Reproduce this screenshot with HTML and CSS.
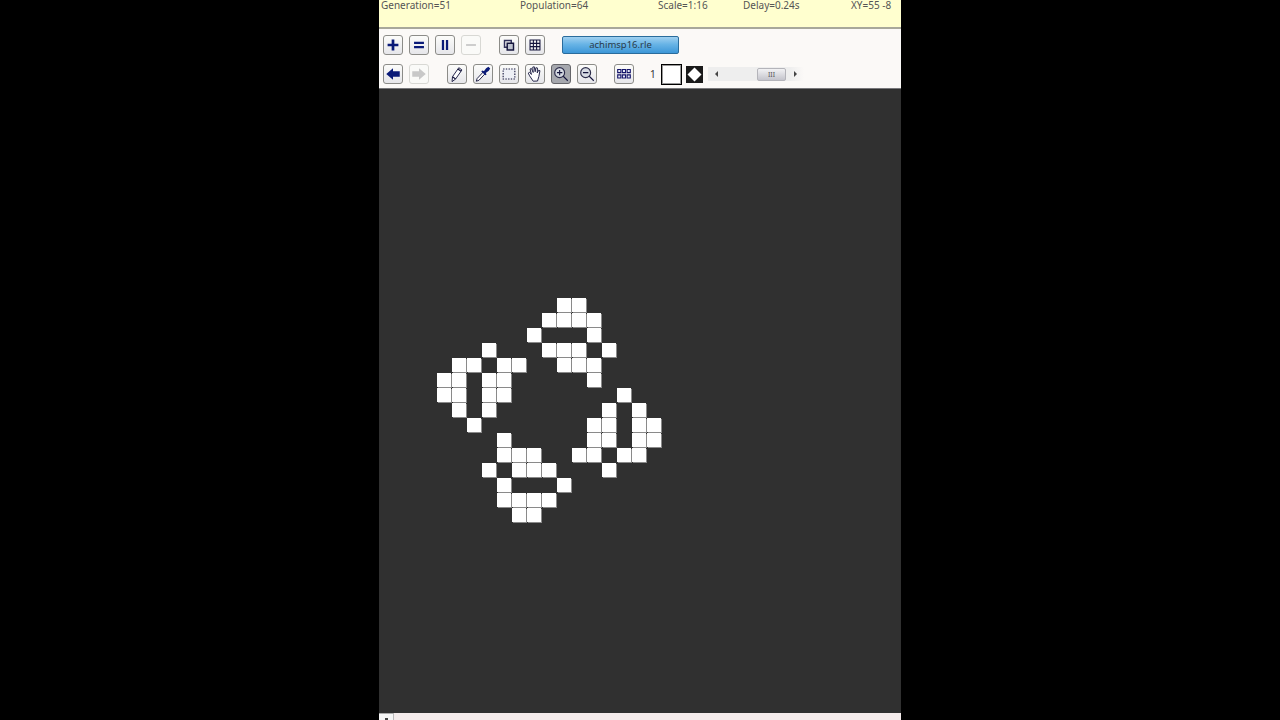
FILE: index.html
```html
<!DOCTYPE html>
<html lang="en">
<head>
  <meta charset="UTF-8" />
  <title>Golly</title>
  <link rel="stylesheet" href="styles.css">
</head>
<body>
  <div class="app">
    <!-- status -->
    <div class="status">
      <span>Generation=51</span>
      <span>Population=64</span>
      <span>Scale=1:16</span>
      <span>Delay=0.24s</span>
      <span>XY=55 -8</span>
    </div>

    <div class="tools">
      <div class="row row-top">
        <button class="btn"><svg class="icon" viewBox="0 0 20 20"><path class="navy" d="M8.500 4h3v4.500h4.500v3h-4.500v4.500h-3v-4.500h-4.500v-3h4.500z"/></svg></button>
        <button class="btn"><svg class="icon" viewBox="0 0 20 20"><path class="navy" d="M4.500 6.500h11v2.500h-11zM4.500 11h11v2.500h-11z"/></svg></button>
        <button class="btn"><svg class="icon" viewBox="0 0 20 20"><path class="navy" d="M6.500 4.500h2.500v11h-2.500zM11 4.500h2.500v11h-2.500z"/></svg></button>
        <button class="btn off"><svg class="icon" viewBox="0 0 20 20"><path class="faded" d="M4.500 9h11v2h-11z"/></svg></button>
        <button class="btn gap-a"><svg class="icon" viewBox="0 0 20 20"><path class="line thick" d="M5 5h7.500v7.500h-7.500z"/><path class="copy" d="M8 8h7v7.500h-7z"/></svg></button>
        <button class="btn"><svg class="icon" viewBox="0 0 20 20"><path class="line dark" d="M4.500 4.500h11v11h-11zM4.500 8.200h11M4.500 11.800h11M8.200 4.500v11M11.800 4.500v11"/></svg></button>
        <button class="file">achimsp16.rle</button>
      </div>
      <div class="row row-bottom">
        <button class="btn"><svg class="icon" viewBox="0 0 20 20"><path class="navy" d="M2.500 10l7.500-6.500v3.500h7.500v6h-7.500v3.500z"/></svg></button>
        <button class="btn off"><svg class="icon" viewBox="0 0 20 20"><path class="faded" d="M17.500 10l-7.500-6.500v3.500h-7.500v6h7.500v3.500z"/></svg></button>
        <button class="btn gap-b"><svg class="icon" viewBox="0 0 20 20"><path class="pen" d="M4.500 18.500l.5-5.500 7-10 3.500 2.500-7 10z"/><path class="line dark" d="M11 4.500l3.500 2.500M5 13l3.500 2.500"/></svg></button>
        <button class="btn"><svg class="icon" viewBox="0 0 20 20"><path class="pen" d="M2.500 18l1-3 7-7.500 2 2-7 7.500z"/><path class="navy" d="M9.500 6l1.500 1 2.500-3.500 2.500-1.500 2 2-1.500 2.500-3.500 2.500 1 1.500-1.500 1-4.500-4.500z"/></svg></button>
        <button class="btn"><svg class="icon" viewBox="0 0 20 20"><path class="dash" d="M3.500 4.500h13v11h-13z"/></svg></button>
        <button class="btn"><svg class="icon" viewBox="0 0 20 20"><path class="pen" d="M8 18l-4-6-1.500-3 1.500-1 2 2.500-1.500-6 1.500-.7 2 4.500-.5-6 1.700-.3 1 5.500.8-4.500 1.700.3-.2 5.500 1.500-3 1.500.5-1.200 6.500-1.500 5z"/></svg></button>
        <button class="btn active"><svg class="icon" viewBox="0 0 20 20"><circle class="lens" cx="8.500" cy="8.500" r="5.500"/><path class="line dark" d="M12.500 12.500l5 5M5.500 8.500h6M8.500 5.500v6"/></svg></button>
        <button class="btn"><svg class="icon" viewBox="0 0 20 20"><circle class="lens" cx="8.500" cy="8.500" r="5.500"/><path class="line dark" d="M12.500 12.500l5 5M5.500 8.500h6"/></svg></button>
        <button class="btn gap-c"><svg class="icon" viewBox="0 0 20 20"><path class="dots" d="M3 5h3.500v3.500h-3.500zM8.200 5h3.500v3.500h-3.500zM13.500 5h3.500v3.500h-3.500zM3 11h3.500v3.500h-3.500zM8.200 11h3.500v3.500h-3.500zM13.500 11h3.500v3.500h-3.500z"/></svg></button>
        <span class="layer-num">1</span>
        <span class="swatch"></span>
        <span class="state"><svg viewBox="0 0 17 17"><path class="diamond" d="M8.500 1.500l7 7-7 7-7-7z"/></svg></span>
        <div class="scroll">
          <span class="arrow arrow-left"></span>
          <span class="thumb">III</span>
          <span class="arrow arrow-right"></span>
        </div>
      </div>
    </div>

    <!-- viewport, cells are 15px apart -->
    <div class="viewport">
      <svg class="cells" width="226" height="226" viewBox="0 0 226 226">
        <g class="live">
          <rect x="120" y="0"/><rect x="135" y="0"/>
          <rect x="105" y="15"/><rect x="120" y="15"/><rect x="135" y="15"/><rect x="150" y="15"/>
          <rect x="90" y="30"/><rect x="150" y="30"/>
          <rect x="45" y="45"/><rect x="105" y="45"/><rect x="120" y="45"/><rect x="135" y="45"/><rect x="165" y="45"/>
          <rect x="15" y="60"/><rect x="30" y="60"/><rect x="60" y="60"/><rect x="75" y="60"/><rect x="120" y="60"/><rect x="135" y="60"/><rect x="150" y="60"/>
          <rect x="0" y="75"/><rect x="15" y="75"/><rect x="45" y="75"/><rect x="60" y="75"/><rect x="150" y="75"/>
          <rect x="0" y="90"/><rect x="15" y="90"/><rect x="45" y="90"/><rect x="60" y="90"/><rect x="180" y="90"/>
          <rect x="15" y="105"/><rect x="45" y="105"/><rect x="165" y="105"/><rect x="195" y="105"/>
          <rect x="30" y="120"/><rect x="150" y="120"/><rect x="165" y="120"/><rect x="195" y="120"/><rect x="210" y="120"/>
          <rect x="60" y="135"/><rect x="150" y="135"/><rect x="165" y="135"/><rect x="195" y="135"/><rect x="210" y="135"/>
          <rect x="60" y="150"/><rect x="75" y="150"/><rect x="90" y="150"/><rect x="135" y="150"/><rect x="150" y="150"/><rect x="180" y="150"/><rect x="195" y="150"/>
          <rect x="45" y="165"/><rect x="75" y="165"/><rect x="90" y="165"/><rect x="105" y="165"/><rect x="165" y="165"/>
          <rect x="60" y="180"/><rect x="120" y="180"/>
          <rect x="60" y="195"/><rect x="75" y="195"/><rect x="90" y="195"/><rect x="105" y="195"/>
          <rect x="75" y="210"/><rect x="90" y="210"/>
        </g>
      </svg>
    </div>

    <div class="bottom"><span class="tab"><span class="tab-mark"></span></span></div>
  </div>
</body>
</html>
```

FILE: styles.css
```css
* { box-sizing: border-box; margin: 0; padding: 0; }
body {
  background: #000;
  height: 720px; overflow: hidden;
  display: flex; justify-content: center;
  font-family: 'Noto Sans', sans-serif;
}
.app {
  width: 522px; height: 720px;
  display: flex; flex-direction: column;
}

/* status */
.status {
  height: 29px; flex: none;
  background: #ffffcf;
  border-bottom: 2px solid #a8a89a;
  padding-left: 2px;
  display: grid; grid-template-columns: 139px 138px 85px 108px 1fr;
  font-size: 10px; line-height: 11px; color: #555;
}

/* toolbars */
.tools {
  height: 60px; flex: none;
  background: #fbf9f7;
  border-bottom: 1px solid #77777a;
  padding-left: 4px;
}
.row { display: flex; align-items: center; }
.row-top { height: 32px; }
.row-bottom { height: 26px; }
.btn {
  width: 20px; height: 20px; margin-right: 6px; flex: none;
  background: linear-gradient(#fcfcfa, #e6e6ea);
  border: 1px solid #8c8c88; border-radius: 3px;
  display: flex; align-items: center; justify-content: center;
}
.btn.off { border-color: #d8d8d4; background: #fafaf8; }
.btn.active { background: #a6a8ae; border-color: #66666a; }
.gap-a { margin-left: 12px; }
.gap-b { margin-left: 12px; }
.gap-c { margin-left: 11px; }
.icon { width: 18px; height: 18px; display: block; }
.navy { fill: #0a1a78; }
.faded { fill: #c8c8c8; }
.line { fill: none; stroke: #30305a; stroke-width: 1; }
.dark { stroke: #14143c; stroke-width: 1.2; }
.thick { stroke-width: 1.6; }
.copy { fill: #c0c4d0; stroke: #14143c; stroke-width: 1.6; }
.pen { fill: #fff; stroke: #24244a; stroke-width: 1.1; }
.lens { fill: #d8dce4; stroke: #2c2c4a; stroke-width: 1.3; }
.dash { fill: #eef0f6; stroke: #14143c; stroke-width: 1.2; stroke-dasharray: 1.500 1.500; }
.dots { fill: #e8eaf4; stroke: #14146a; stroke-width: 1.2; }

.file {
  width: 117px; height: 18px; margin-left: 11px; margin-bottom: 1px;
  background: linear-gradient(#a0d0f0 0%, #68b4e6 45%, #3d97d8 100%);
  border: 1px solid #2a6c9c; border-radius: 2px;
  font-family: inherit; font-size: 9.500px; line-height: 14px; color: #2a3a4a;
}
.layer-num { font-size: 10px; color: #333; margin-left: 10px; width: 11px; }
.swatch {
  width: 21px; height: 21px; flex: none;
  background: #fff; border: 1px solid #000; box-shadow: inset 0 0 0 1px #999;
}
.state {
  width: 17px; height: 17px; margin-left: 4px; flex: none;
  background: #1a1a1a;
}
.state svg { display: block; width: 17px; height: 17px; }
.diamond { fill: #fff; }
.scroll {
  width: 96px; height: 14px; margin-left: 5px; flex: none;
  background: linear-gradient(90deg, #eeeeee 0%, #eeeeee 85%, #fbf9f7 100%);
  display: flex; align-items: center;
  padding-left: 7px;
}
.arrow { width: 0; height: 0; border-top: 3px solid transparent; border-bottom: 3px solid transparent; }
.arrow-left { border-right: 3px solid #444; margin-right: 39px; }
.arrow-right { border-left: 3px solid #444; margin-left: 8px; }
.thumb {
  width: 29px; height: 13px; flex: none;
  background: linear-gradient(#f2f2f4, #c4c4cc);
  border: 1px solid #b4b4ba; border-radius: 2px;
  font-size: 7px; line-height: 11px; text-align: center; color: #555;
}

/* viewport */
.viewport {
  flex: 1;
  background: #303030;
  padding: 209px 0 0 58px;
}
.cells { display: block; }
.cells rect { width: 14px; height: 14px; }
.live { fill: #fff; filter: drop-shadow(1px 1px 0 #8a8a8a); }

.bottom {
  height: 7px; flex: none;
  background: #f4ecec;
}
.tab {
  display: flex; justify-content: center; align-items: flex-end;
  width: 15px; height: 7px;
  background: #f6f6f6; border-top: 1px solid #aaa; border-right: 1px solid #bbb;
}
.tab-mark { width: 3px; height: 2px; background: #444; }
```
